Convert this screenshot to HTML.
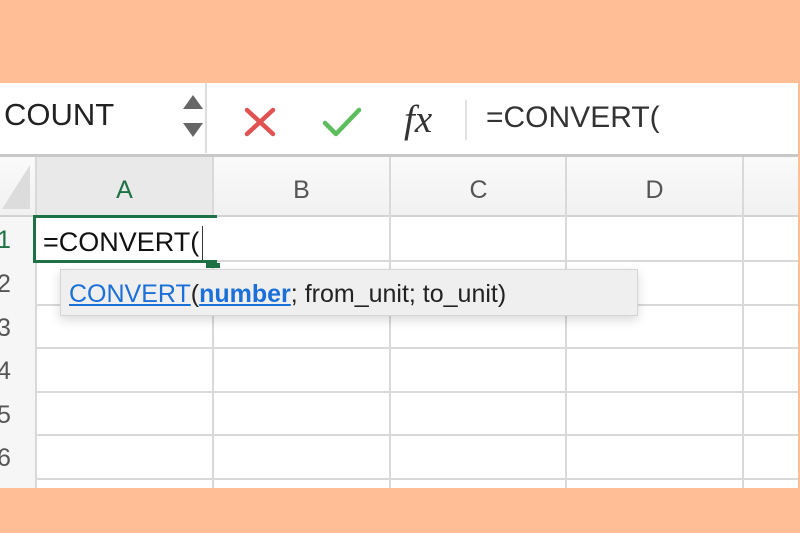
<!DOCTYPE html>
<html><head><style>
*{margin:0;padding:0;box-sizing:border-box}
body{width:800px;height:533px;background:#FFBE96;position:relative;overflow:hidden;font-family:"Liberation Sans",sans-serif}
.a{position:absolute}
.win{left:0;top:83px;width:798px;height:405px;background:#fff;overflow:hidden}
.vl{position:absolute;width:2px;background:#d9d9d9}
.hl{position:absolute;height:2px;background:#d9d9d9}
.ch{position:absolute;top:93px;font-size:25px;color:#555;text-align:center}
.rh{position:absolute;left:-3px;font-size:25px;color:#555}
</style></head><body>
<div class="a win">
  <div class="a" style="left:0;top:0;width:798px;height:70px;background:#fff"></div>
  <div class="a" style="left:4px;top:14px;font-size:31px;color:#222">COUNT</div>
  <svg class="a" style="left:182px;top:10px" width="22" height="48"><path d="M1 16 L11 2 L21 16Z" fill="#666"/><path d="M1 30 L11 44 L21 30Z" fill="#666"/></svg>
  <div class="a" style="left:205px;top:0;width:2px;height:70px;background:#ddd"></div>
  <svg class="a" style="left:244px;top:24px" width="32" height="30"><path d="M3 3 L29 27 M29 3 L3 27" stroke="#e05252" stroke-width="4.5" stroke-linecap="round"/></svg>
  <svg class="a" style="left:322px;top:24px" width="40" height="30"><path d="M3 16 L14 27 L37 3" stroke="#5cbd5c" stroke-width="4.5" fill="none" stroke-linecap="round" stroke-linejoin="round"/></svg>
  <div class="a" style="left:404px;top:14px;font-family:'Liberation Serif',serif;font-style:italic;font-size:39px;color:#333">fx</div>
  <div class="a" style="left:465px;top:17px;width:2px;height:40px;background:#e3e3e3"></div>
  <div class="a" style="left:486px;top:18px;font-size:30px;color:#333">=CONVERT(</div>
  <div class="a" style="left:0;top:71px;width:798px;height:3px;background:#c8c8c8"></div>
  <div class="a" style="left:0;top:74px;width:798px;height:58px;background:linear-gradient(#fafafa,#f1f1f1)"></div>
  <svg class="a" style="left:0;top:80px" width="32" height="48"><path d="M30 2 L30 46 L2 46Z" fill="#dcdcdc"/></svg>
  <div class="a" style="left:36px;top:74px;width:177px;height:58px;background:#e9e9e9"></div>
  <div class="ch" style="left:36px;width:177px;color:#1e7145">A</div>
  <div class="ch" style="left:213px;width:177px">B</div>
  <div class="ch" style="left:390px;width:177px">C</div>
  <div class="ch" style="left:566px;width:177px">D</div>
  <div class="a" style="left:0;top:132px;width:798px;height:2px;background:#d3d3d3"></div>
  <div class="vl" style="left:35px;top:74px;height:331px"></div>
  <div class="vl" style="left:212px;top:74px;height:331px"></div>
  <div class="vl" style="left:389px;top:74px;height:331px"></div>
  <div class="vl" style="left:565px;top:74px;height:331px"></div>
  <div class="vl" style="left:742px;top:74px;height:331px"></div>
  <div class="hl" style="left:0;top:177px;width:798px"></div>
  <div class="hl" style="left:0;top:221px;width:798px"></div>
  <div class="hl" style="left:0;top:264px;width:798px"></div>
  <div class="hl" style="left:0;top:308px;width:798px"></div>
  <div class="hl" style="left:0;top:351px;width:798px"></div>
  <div class="hl" style="left:0;top:395px;width:798px"></div>
  <div class="a" style="left:0;top:134px;width:35px;height:271px;background:#f6f6f6"></div>
  <div class="rh" style="top:143px;color:#1e7145">1</div>
  <div class="rh" style="top:187px">2</div>
  <div class="rh" style="top:231px">3</div>
  <div class="rh" style="top:274px">4</div>
  <div class="rh" style="top:318px">5</div>
  <div class="rh" style="top:361px">6</div>
  <div class="a" style="left:33px;top:132px;width:184px;height:48px;border:3px solid #1e7145;border-right:none;background:#fff"></div>
  <div class="a" style="left:33px;top:132px;width:184px;height:3px;background:#1e7145"></div>
  <div class="a" style="left:206px;top:180px;width:14px;height:5px;background:#1e7145"></div>
  <div class="a" style="left:43px;top:144px;font-size:27px;color:#111">=CONVERT(</div>
  <div class="a" style="left:202px;top:143px;width:1px;height:34px;background:#333"></div>
  <div class="a" style="left:60px;top:186px;width:578px;height:47px;background:#efefef;border:1px solid #d5d5d5;box-shadow:0 4px 10px rgba(0,0,0,.15)"></div>
  <div class="a" style="left:69px;top:197px;font-size:25px;color:#222;white-space:nowrap"><span style="color:#1a6fd9;text-decoration:underline">CONVERT</span>(<b style="color:#1a6fd9;text-decoration:underline">number</b>; from_unit; to_unit)</div>
</div>
</body></html>
